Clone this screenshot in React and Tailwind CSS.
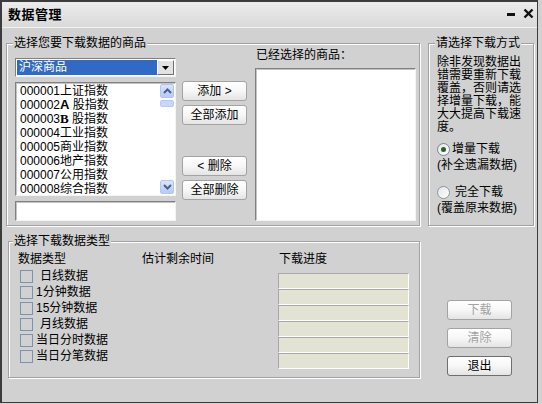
import React from "react"

const stocks = [
  ["000001", "上证指数"],
  ["000002", "A", " 股指数"],
  ["000003", "B", " 股指数"],
  ["000004", "工业指数"],
  ["000005", "商业指数"],
  ["000006", "地产指数"],
  ["000007", "公用指数"],
  ["000008", "综合指数"],
]

const dataTypes = [
  { label: "日线数据", pad: true },
  { label: "1分钟数据" },
  { label: "15分钟数据" },
  { label: "月线数据", pad: true },
  { label: "当日分时数据" },
  { label: "当日分笔数据" },
]

function Btn({ children, disabled, strong }) {
  return (
    <button
      className={
        "h-[20px] w-[65px] rounded-[3px] border bg-linear-to-b from-white via-[#f7f7f7] to-[#e4e4e4] text-[12px] leading-[18px] " +
        (strong ? "border-[#6e6e6e] " : "border-[#a3a3a3] ") +
        (disabled ? "text-[#a2a2a2]" : "text-black")
      }
    >
      {children}
    </button>
  )
}

function GroupBox({ title, className, children }) {
  return (
    <fieldset className={"border border-[#a2a2a2] shadow-[inset_1px_1px_0_#fff,1px_1px_0_#fff] " + className}>
      <legend className="bg-[#d1d1d1] px-[1px] -ml-[2px] leading-[14px]">{title}</legend>
      {children}
    </fieldset>
  )
}

function Chevron({ up }) {
  return (
    <svg width="9" height="6" viewBox="0 0 9 6">
      <path d={up ? "M1 5 L4.5 1.5 L8 5" : "M1 1 L4.5 4.5 L8 1"} fill="none" stroke="#4d6185" strokeWidth="2" />
    </svg>
  )
}

export default function App() {
  return (
    <div className="w-[542px] h-[404px] bg-[#d1d1d1] font-['Liberation_Sans','Noto_Sans_CJK_SC',sans-serif] text-[12px] leading-[14px] text-black">
      <div className="w-[538px] h-[403px] border-l-2 border-t-2 border-r border-b border-[#3c3c3c] flex flex-col">
        {/* title bar */}
        <div className="h-[26px] shrink-0 flex items-center pl-[6px] pr-[3px] bg-linear-to-b from-[#ececec] to-[#d9d9d9] border-b border-[#f2f2f2]">
          <span className="font-bold text-[13px] tracking-[0.5px]">数据管理</span>
          <div className="ml-auto flex items-center gap-[7px]">
            <svg width="10" height="12" viewBox="0 0 10 12">
              <rect x="1" y="4" width="8" height="3" fill="#111" />
            </svg>
            <svg width="11" height="11" viewBox="0 0 11 11" className="-mt-[3px]">
              <path d="M1.5 1.5 L9.5 9.5 M9.5 1.5 L1.5 9.5" stroke="#111" strokeWidth="2.4" />
            </svg>
          </div>
        </div>

        <div className="pl-[4px] pt-[8px]">
          {/* top row */}
          <div className="flex gap-[8px]">
            <GroupBox title="选择您要下载数据的商品" className="w-[414px] h-[190px] pl-[8px] pr-[3px]">
              <div className="flex">
                <div className="w-[161px]">
                  <div className="mt-[8px] h-[19px] flex border border-t-[#808080] border-l-[#808080] border-r-[#f4f4f4] border-b-[#f4f4f4] bg-white p-[1px]">
                    <div className="flex-1 bg-[#316ac5] text-white pl-[2px] leading-[15px]">沪深商品</div>
                    <div className="w-[17px] flex items-center justify-center bg-[#e2e2e2] border border-t-white border-l-white border-r-[#707070] border-b-[#707070]">
                      <svg width="7" height="4" viewBox="0 0 7 4">
                        <path d="M0 0 L7 0 L3.5 4 Z" fill="#000" />
                      </svg>
                    </div>
                  </div>
                  <div className="mt-[5px] h-[114px] flex bg-white border border-t-[#808080] border-l-[#808080] border-r-[#f4f4f4] border-b-[#f4f4f4] shadow-[inset_1px_1px_0_#c4c4c4]">
                    <div className="flex-1 pl-[4px] pt-[1px]">
                      {stocks.map((s) => (
                        <div key={s[0]} className="leading-[14px] whitespace-nowrap">
                          {s[0]}
                          {s.length === 3 ? (
                            <>
                              <span className={s[1] === "B" ? "font-bold font-['Liberation_Serif',serif] text-[13px]" : "font-bold text-[13px]"}>{s[1]}</span>
                              {s[2]}
                            </>
                          ) : (
                            s[1]
                          )}
                        </div>
                      ))}
                    </div>
                    <div className="w-[14px] mr-[1px] my-[1px] flex flex-col">
                      <div className="h-[14px] rounded-[2px] bg-linear-to-b from-[#d9e4fd] to-[#b6caf8] border border-[#b3c6ef] flex items-center justify-center">
                        <Chevron up />
                      </div>
                      <div className="mt-[2px] h-[7px] rounded-[2px] bg-[#c8d6fa] border border-[#b8c9f2]" />
                      <div className="flex-1" />
                      <div className="h-[14px] rounded-[2px] bg-linear-to-b from-[#d9e4fd] to-[#b6caf8] border border-[#b3c6ef] flex items-center justify-center">
                        <Chevron />
                      </div>
                    </div>
                  </div>
                  <div className="mt-[5px] h-[20px] bg-white border border-t-[#808080] border-l-[#808080] border-r-[#f4f4f4] border-b-[#f4f4f4] shadow-[inset_1px_1px_0_#c4c4c4]" />
                </div>

                <div className="ml-[6px] w-[65px] flex flex-col">
                  <div className="mt-[31px]"><Btn>添加 &gt;</Btn></div>
                  <div className="mt-[4px]"><Btn>全部添加</Btn></div>
                  <div className="mt-[31px]"><Btn>&lt; 删除</Btn></div>
                  <div className="mt-[4px]"><Btn>全部删除</Btn></div>
                </div>

                <div className="ml-[8px] w-[161px]">
                  <div className="-mt-[2px] leading-[14px] pl-[1px]">已经选择的商品：</div>
                  <div className="mt-[6px] h-[153px] bg-white border border-t-[#808080] border-l-[#808080] border-r-[#f4f4f4] border-b-[#f4f4f4] shadow-[inset_1px_1px_0_#c4c4c4]" />
                </div>
              </div>
            </GroupBox>

            <GroupBox title="请选择下载方式" className="w-[106px] h-[190px] pl-[8px] pr-[2px]">
              <div className="mt-[6px] leading-[13px]">
                <div>除非发现数据出</div>
                <div>错需要重新下载</div>
                <div>覆盖，否则请选</div>
                <div>择增量下载，能</div>
                <div>大大提高下载速</div>
                <div>度。</div>
              </div>
              <div className="mt-[7px] h-[16px] flex items-center">
                <span className="w-[13px] h-[13px] rounded-full border border-[#7a8694] bg-linear-to-br from-[#e4e4e4] to-white flex items-center justify-center">
                  <span className="w-[5px] h-[5px] rounded-full bg-[#2d5e2d]" />
                </span>
                <span className="ml-[2px]">增量下载</span>
              </div>
              <div className="leading-[16px]">(补全遗漏数据)</div>
              <div className="mt-[11px] h-[16px] flex items-center">
                <span className="w-[13px] h-[13px] rounded-full border border-[#8a96a4] bg-linear-to-br from-[#e4e4e4] to-white" />
                <span className="ml-[5px]">完全下载</span>
              </div>
              <div className="leading-[16px]">(覆盖原来数据)</div>
            </GroupBox>
          </div>

          {/* bottom row */}
          <div className="mt-[8px] flex">
            <GroupBox title="选择下载数据类型" className="ml-[2px] w-[412px] h-[144px] pl-[6px]">
              <div className="flex pl-[3px]">
                <div className="w-[124px]">
                  <div className="mt-[4px] leading-[14px]">数据类型</div>
                  <div className="mt-[2px] pl-[2px]">
                    {dataTypes.map((d) => (
                      <div key={d.label} className="h-[16px] flex items-center">
                        <span className="w-[13px] h-[13px] border border-[#7b93ad]" />
                        <span className={d.pad ? "ml-[7px]" : "ml-[3px]"}>{d.label}</span>
                      </div>
                    ))}
                  </div>
                </div>
                <div className="w-[137px]">
                  <div className="mt-[4px] leading-[14px]">估计剩余时间</div>
                </div>
                <div>
                  <div className="mt-[4px] leading-[14px]">下载进度</div>
                  <div className="mt-[7px] -ml-px w-[131px]">
                    {[0, 1, 2, 3, 4, 5].map((i) => (
                      <div key={i} className="h-[16px] bg-[#e3e3d3] border border-t-[#a8a8a8] border-l-[#a8a8a8] border-r-white border-b-white" />
                    ))}
                  </div>
                </div>
              </div>
            </GroupBox>

            <div className="ml-[27px] mt-[66px] flex flex-col gap-[8px]">
              <Btn disabled>下载</Btn>
              <Btn disabled>清除</Btn>
              <Btn strong>退出</Btn>
            </div>
          </div>
        </div>
      </div>
    </div>
  )
}
